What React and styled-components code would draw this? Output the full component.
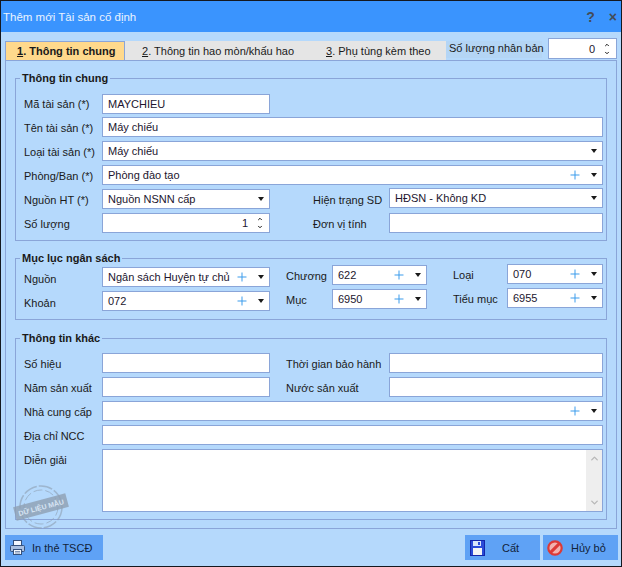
import styled, { createGlobalStyle } from "styled-components"
import { Plus, ChevronUp, ChevronDown } from "lucide-react"

const GlobalStyle = createGlobalStyle`
    html, body {
        margin: 0;
        padding: 0;
        background: #b5d9fc;
    }
    body {
        font-family: "Liberation Sans", Arial, sans-serif;
        font-size: 11px;
        color: #1a1a1a;
    }
`;

const Window = styled.div`
    position: relative;
    width: 622px;
    height: 567px;
    box-sizing: border-box;
    background: #b5d9fc;
    border: 1px solid #14181f;
    display: flex;
    flex-direction: column;
    overflow: hidden;
`;
const TitleBar = styled.div`
    height: 31px;
    flex: none;
    background: #3a94fe;
    display: flex;
    align-items: center;
    justify-content: space-between;
    padding: 0 4px 0 2px;
    color: #eaf3ff;
    font-size: 11.5px;
`;
const TitleButtons = styled.div`
    display: flex;
    gap: 14px;
    color: #444c58;
    font-size: 14px;
    font-weight: 700;
`;
const Content = styled.div`
    flex: 1;
    padding: 8px 4px 0 4px;
    display: flex;
    flex-direction: column;
`;
const TabRow = styled.div`
    display: flex;
    align-items: flex-start;
    height: 20px;
`;
const Tab = styled.div`
    height: 19px;
    box-sizing: border-box;
    display: flex;
    align-items: center;
    white-space: nowrap;
    background: ${(p) => (p.$active ? "#ffd98c" : "#e5e5e5")};
    border: ${(p) => (p.$active ? "1px solid #8aa5d8" : "none")};
    border-bottom: none;
    font-weight: ${(p) => (p.$active ? 700 : 400)};
    width: ${(p) => p.$width}px;
    padding-left: ${(p) => p.$pad}px;
    margin-top: 1px;
`;
const Digit = styled.span`
    text-decoration: underline;
`;
const CloneLabel = styled.div`
    width: 96px;
    height: 17px;
    line-height: 15px;
    margin-top: 1px;
    padding-left: 3px;
    box-sizing: border-box;
    white-space: nowrap;
    background: #b4d5f5;
`;
const Panel = styled.div`
    border: 1px solid #8aa5d8;
    height: 469px;
    box-sizing: border-box;
    padding: 10px 9px 0 9px;
    display: flex;
    flex-direction: column;
`;
const Group = styled.fieldset`
    margin: 0 0 ${(p) => p.$after}px 0;
    padding: 0 3px 0 8px;
    height: ${(p) => p.$height}px;
    flex: none;
    box-sizing: border-box;
    border: 1px solid #8aa5d8;
    min-width: 0;
`;
const Legend = styled.legend`
    font-weight: 700;
    padding: 0 2px;
    margin-left: -4px;
    line-height: 14px;
`;
const Grid = styled.div`
    display: grid;
    grid-template-columns: ${(p) => p.$columns};
    grid-template-rows: ${(p) => p.$rows};
    align-items: start;
    margin-top: ${(p) => p.$top || 0}px;
`;
const Label = styled.label`
    grid-column: ${(p) => p.$col || "auto"};
    margin-top: ${(p) => p.$dy || 0}px;
    line-height: 22px;
    white-space: nowrap;
`;
const Input = styled.div`
    grid-column: ${(p) => p.$col || "auto"};
    margin-top: ${(p) => p.$dy || 0}px;
    height: ${(p) => p.$height || 20}px;
    box-sizing: border-box;
    background: #fff;
    border: 1px solid #8aa5d8;
    display: flex;
    align-items: center;
    padding: 0 1px 0 5px;
    color: #22152e;
    white-space: nowrap;
    overflow: hidden;
`;
const CloneInput = styled(Input)`
    flex: none;
    width: 69px;
    height: 21px;
    margin: -2px 0 0 6px;
`;
const Value = styled.span`
    flex: 1;
    text-align: ${(p) => (p.$right ? "right" : "left")};
`;
const Arrow = styled.span`
    flex: none;
    width: 0;
    height: 0;
    margin: 0 4.5px 0 8.5px;
    border-left: 3.5px solid transparent;
    border-right: 3.5px solid transparent;
    border-top: 4px solid #1a1a1a;
`;
const Stepper = styled.div`
    display: flex;
    flex-direction: column;
    justify-content: space-between;
    height: 14px;
    margin: 0 5px 0 9px;
    color: #1a1a1a;
`;
const TextArea = styled(Input)`
    align-items: stretch;
    padding: 0;
    justify-content: flex-end;
`;
const ScrollBar = styled.div`
    width: 16px;
    background: #eeeeee;
    display: flex;
    flex-direction: column;
    justify-content: space-between;
    align-items: center;
    padding: 3px 0;
    color: #b8b8b8;
`;
const Stamp = styled.svg`
    position: absolute;
    left: 11px;
    top: 484px;
    pointer-events: none;
    overflow: visible;
`;
const Footer = styled.div`
    display: flex;
    align-items: center;
    justify-content: space-between;
    margin: 6px -1px 0 0;
`;
const FooterRight = styled.div`
    display: flex;
    gap: 3px;
`;
const Button = styled.div`
    width: ${(p) => p.$width}px;
    height: 25px;
    box-sizing: border-box;
    background: #5fa2f5;
    display: flex;
    align-items: center;
    padding-left: ${(p) => p.$pad || 4}px;
    color: #12233a;
`;
const ButtonText = styled.span`
    margin-left: ${(p) => p.$left}px;
`;

const Combo = ({ text, col, plus, dy }) => (
    <Input $col={col} $dy={dy}>
        <Value>{text}</Value>
        {plus && <Plus size={14} color="#3a9bec" strokeWidth={1.7} />}
        <Arrow />
    </Input>
)

const Steps = () => (
    <Stepper>
        <ChevronUp size={6} strokeWidth={4} />
        <ChevronDown size={6} strokeWidth={4} />
    </Stepper>
)

const PrinterIcon = () => (
    <svg width="17" height="17" viewBox="0 0 17 17">
        <rect x="4.5" y="1.5" width="8" height="5" fill="#f4f8ff" stroke="#34507c" />
        <rect x="1.5" y="6.5" width="14" height="6" rx="1" fill="#a9bfe0" stroke="#34507c" />
        <rect x="4.5" y="10.5" width="8" height="5" fill="#f4f8ff" stroke="#34507c" />
        <path d="M6 12.5h5M6 14h5" stroke="#7f93b5" />
    </svg>
)

const SaveIcon = () => (
    <svg width="15" height="16" viewBox="0 0 15 16">
        <rect x="0.5" y="0.5" width="14" height="15" fill="#2a4bd8" stroke="#1426a8" />
        <rect x="3" y="1" width="8" height="5" fill="#d8e6fa" />
        <rect x="8" y="2" width="2" height="3" fill="#2a4bd8" />
        <rect x="3" y="8" width="9" height="7" fill="#f4f4f4" />
    </svg>
)

const CancelIcon = () => (
    <svg width="16" height="16" viewBox="0 0 16 16">
        <circle cx="8" cy="8" r="6.7" fill="#f2b1ad" stroke="#dc3a36" strokeWidth="2.2" />
        <path d="M3.6 12.4L12.4 3.6" stroke="#dc3a36" strokeWidth="3" />
    </svg>
)

const App = () => {
    return (
        <Window>
            <GlobalStyle />
            <TitleBar>
                <span>Thêm mới Tài sản cố định</span>
                <TitleButtons>
                    <span>?</span>
                    <span>×</span>
                </TitleButtons>
            </TitleBar>
            <Content>
                <TabRow>
                    <Tab $active $width={120} $pad={11}><Digit>1</Digit>. Thông tin chung</Tab>
                    <Tab $width={175} $pad={17}><Digit>2</Digit>. Thông tin hao mòn/khấu hao</Tab>
                    <Tab $width={146} $pad={26}><Digit>3</Digit>. Phụ tùng kèm theo</Tab>
                    <CloneLabel>Số lượng nhân bản</CloneLabel>
                    <CloneInput>
                        <Value $right>0</Value>
                        <Steps />
                    </CloneInput>
                </TabRow>
                <Panel>
                    <Group $height={170} $after={10}>
                        <Legend>Thông tin chung</Legend>
                        <Grid $top={9} $columns="78px 168px 43px 76px 214px" $rows="23px 24px 24px 24px 24px 20px">
                            <Label $dy={-1}>Mã tài sản (*)</Label>
                            <Input $col="2"><Value>MAYCHIEU</Value></Input>
                            <Label $col="1">Tên tài sản (*)</Label>
                            <Input $col="2 / -1"><Value>Máy chiếu</Value></Input>
                            <Label $col="1">Loại tài sản (*)</Label>
                            <Combo col="2 / -1" text="Máy chiếu" />
                            <Label $col="1">Phòng/Ban (*)</Label>
                            <Combo col="2 / -1" text="Phòng đào tạo" plus />
                            <Label $col="1">Nguồn HT (*)</Label>
                            <Combo col="2" text="Nguồn NSNN cấp" />
                            <Label $col="4">Hiện trạng SD</Label>
                            <Combo col="5" text="HĐSN - Không KD" dy={-1} />
                            <Label $col="1">Số lượng</Label>
                            <Input $col="2">
                                <Value $right>1</Value>
                                <Steps />
                            </Input>
                            <Label $col="4">Đơn vị tính</Label>
                            <Input $col="5" />
                        </Grid>
                    </Group>
                    <Group $height={69} $after={11}>
                        <Legend>Mục lục ngân sách</Legend>
                        <Grid $columns="78px 168px 16px 46px 95px 26px 54px 96px" $rows="24px 20px">
                            <Label $dy={3}>Nguồn</Label>
                            <Combo col="2" text="Ngân sách Huyện tự chủ" plus dy={2} />
                            <Label $col="4">Chương</Label>
                            <Combo col="5" text="622" plus />
                            <Label $col="7" $dy={-1}>Loại</Label>
                            <Combo col="8" text="070" plus dy={-1} />
                            <Label $col="1" $dy={3}>Khoản</Label>
                            <Combo col="2" text="072" plus dy={2} />
                            <Label $col="4">Mục</Label>
                            <Combo col="5" text="6950" plus />
                            <Label $col="7" $dy={-1}>Tiểu mục</Label>
                            <Combo col="8" text="6955" plus dy={-1} />
                        </Grid>
                    </Group>
                    <Group $height={189} $after={0}>
                        <Legend>Thông tin khác</Legend>
                        <Grid $top={8} $columns="78px 168px 16px 103px 214px" $rows="24px 24px 24px 24px 63px">
                            <Label>Số hiệu</Label>
                            <Input $col="2" />
                            <Label $col="4">Thời gian bảo hành</Label>
                            <Input $col="5" />
                            <Label $col="1">Năm sản xuất</Label>
                            <Input $col="2" />
                            <Label $col="4">Nước sản xuất</Label>
                            <Input $col="5" />
                            <Label $col="1">Nhà cung cấp</Label>
                            <Combo col="2 / -1" text="" plus />
                            <Label $col="1">Địa chỉ NCC</Label>
                            <Input $col="2 / -1" />
                            <Label $col="1">Diễn giải</Label>
                            <TextArea $col="2 / -1" $height={63}>
                                <ScrollBar>
                                    <ChevronUp size={11} strokeWidth={3} />
                                    <ChevronDown size={11} strokeWidth={3} />
                                </ScrollBar>
                            </TextArea>
                        </Grid>
                    </Group>
                </Panel>
                <Footer>
                    <Button $width={98}>
                        <PrinterIcon />
                        <ButtonText $left={6}>In thẻ TSCĐ</ButtonText>
                    </Button>
                    <FooterRight>
                        <Button $width={75} $pad={5}>
                            <SaveIcon />
                            <ButtonText $left={17}>Cất</ButtonText>
                        </Button>
                        <Button $width={75}>
                            <CancelIcon />
                            <ButtonText $left={8}>Hủy bỏ</ButtonText>
                        </Button>
                    </FooterRight>
                </Footer>
            </Content>
            <Stamp width="60" height="48" viewBox="0 0 60 48">
                <g opacity="0.6" fill="none" stroke="#8e9fb2">
                    <circle cx="29" cy="22" r="21" strokeWidth="1.5" strokeDasharray="14 2" />
                    <circle cx="29" cy="22" r="17" strokeWidth="1" strokeDasharray="9 3" />
                </g>
                <g transform="rotate(-15 29 22)">
                    <rect x="2" y="15" width="54" height="14" fill="#8e9fb2" opacity="0.8" />
                    <text x="29" y="25" textAnchor="middle" fontSize="7" fontWeight="700" fill="#d6e4f3">DỮ LIỆU MẪU</text>
                </g>
            </Stamp>
        </Window>
    )
}

export default App
